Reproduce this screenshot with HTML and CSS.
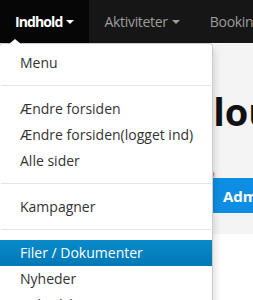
FILE: index.html
```html
<!DOCTYPE html>
<html lang="da">
<head>
    <meta charset="UTF-8">
    <meta name="viewport" content="width=device-width, initial-scale=1.0">
    <title>Indhold</title>
    <link rel="stylesheet" href="styles.css">
</head>
<body>
    <div class="navbar">
        <div class="nav-item active">
            Indhold<span class="caret"></span>
            <!-- DROPDOWN -->
            <ul class="dropdown">
                <li><a href="#">Menu</a></li>
                <li class="divider"></li>
                <li><a href="#">Ændre forsiden</a></li>
                <li><a href="#">Ændre forsiden(logget ind)</a></li>
                <li><a href="#">Alle sider</a></li>
                <li class="divider"></li>
                <li><a href="#">Kampagner</a></li>
                <li class="divider"></li>
                <li class="selected"><a href="#">Filer / Dokumenter</a></li>
                <li><a href="#">Nyheder</a></li>
                <li><a href="#">Nyhedsbreve</a></li>
            </ul>
        </div>
        <div class="nav-item">Aktiviteter<span class="caret"></span></div>
        <div class="nav-item">Booking</div>
    </div>

    <div class="hero">
        <h1>Cloud</h1>
        <input type="button" value="Administration">
    </div>

    <!-- pil -->
    <svg class="arrow" width="253" height="300" viewBox="0 0 253 300">
        <line x1="210" y1="174" x2="166" y2="231" stroke="#f23c3e" stroke-width="7" stroke-linecap="round"/>
        <polygon points="153,250 157,218 182,236" fill="#f23c3e"/>
    </svg>
</body>
</html>
```

FILE: styles.css
```css
html, body{
    margin: 0;
    height: 100%;
    overflow: hidden;
}
body{
    font-family: "Open Sans", "DejaVu Sans", sans-serif;
    background-color: white;
    color: #333;
}
.navbar{
    display: flex;
    height: 43px;
    background-color: #161616;
    white-space: nowrap;
}
.nav-item{
    position: relative;
    display: flex;
    align-items: center;
    padding: 0 15px;
    color: #9d9d9d;
    font-size: 14px;
    letter-spacing: -0.3px;
}
.nav-item.active{
    background-color: #060606;
    color: white;
    font-weight: bold;
    letter-spacing: -0.9px;
}
.caret{
    display: inline-block;
    width: 0;
    height: 0;
    margin-left: 4px;
    border-top: 4px solid currentColor;
    border-left: 4px solid transparent;
    border-right: 4px solid transparent;
}

/* DROPDOWN */
.dropdown{
    position: absolute;
    top: 100%;
    left: -1px;
    z-index: 10;
    box-sizing: border-box;
    width: 214px;
    margin: 0;
    padding: 6px 0;
    list-style: none;
    background-color: white;
    border: 1px solid rgba(0,0,0,0.2);
    border-radius: 4px;
    box-shadow: 0 5px 10px rgba(0,0,0,0.2);
    font-weight: normal;
    letter-spacing: 0;
}
.dropdown:before,
.dropdown:after{
    content: "";
    position: absolute;
    border-left: 7px solid transparent;
    border-right: 7px solid transparent;
}
.dropdown:before{
    left: 8px;
    top: -6px;
    border-bottom: 6px solid rgba(0,0,0,0.25);
}
.dropdown:after{
    left: 9px;
    top: -5px;
    border-left-width: 6px;
    border-right-width: 6px;
    border-bottom: 5px solid white;
}
.dropdown a{
    display: block;
    padding: 3px 20px;
    line-height: 20px;
    font-size: 14px;
    color: #333;
    text-decoration: none;
}
.dropdown .divider{
    height: 1px;
    margin: 9px 1px 10px;
    background-color: #e5e5e5;
}
.dropdown .selected a{
    background: linear-gradient(#0a89c8, #0079b6);
    color: white;
}

/* HERO */
.hero{
    background-color: #f4f4f4;
    height: 191px;
    padding-left: 211px;
    box-sizing: border-box;
    padding-top: 45px;
    white-space: nowrap;
}
.hero h1{
    margin: 0 0 0 -22px;
    font-size: 38px;
    line-height: 46px;
    font-weight: bold;
    color: #111;
}
.hero input{
    display: block;
    margin-top: 44px;
    height: 35px;
    padding: 0 12px;
    border: none;
    border-radius: 4px;
    background-color: #0e8ee2;
    color: white;
    font-family: inherit;
    font-size: 15px;
    font-weight: bold;
}

.arrow{
    position: absolute;
    left: 0;
    top: 0;
    filter: drop-shadow(1px 1px 1px rgba(0,0,0,0.3));
}
```
